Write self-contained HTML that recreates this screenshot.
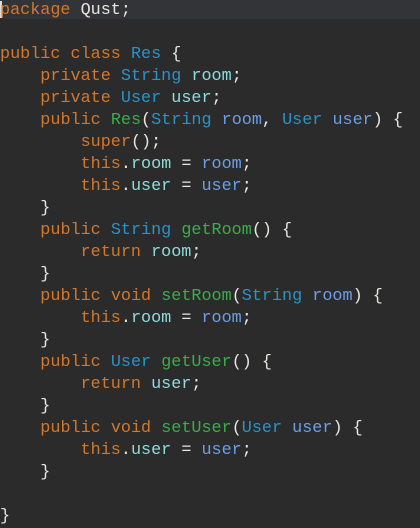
<!DOCTYPE html>
<html><head><meta charset="utf-8"><style>
html,body{margin:0;padding:0;background:#2b2b2b;width:420px;height:526px;overflow:hidden}
.hl{position:absolute;left:0;top:0;width:420px;height:19px;background:#333437}
.cur{position:absolute;left:0;top:1px;width:2px;height:17px;background:#ddd}
pre{position:absolute;left:0;top:0px;margin:0;font-family:"Liberation Mono",monospace;font-size:16.8px;line-height:22px;color:#e8e6e0}
.k{color:#d2782e}.t{color:#2a93c8}.f{color:#8edcdc}.p{color:#6e9ee6}.m{color:#3aae4a}
</style></head><body>
<div class="hl"></div><div class="cur"></div>
<pre><span class="k">package</span> Qust;

<span class="k">public</span> <span class="k">class</span> <span class="t">Res</span> {
    <span class="k">private</span> <span class="t">String</span> <span class="f">room</span>;
    <span class="k">private</span> <span class="t">User</span> <span class="f">user</span>;
    <span class="k">public</span> <span class="m">Res</span>(<span class="t">String</span> <span class="p">room</span>, <span class="t">User</span> <span class="p">user</span>) {
        <span class="k">super</span>();
        <span class="k">this</span>.<span class="f">room</span> = <span class="p">room</span>;
        <span class="k">this</span>.<span class="f">user</span> = <span class="p">user</span>;
    }
    <span class="k">public</span> <span class="t">String</span> <span class="m">getRoom</span>() {
        <span class="k">return</span> <span class="f">room</span>;
    }
    <span class="k">public</span> <span class="k">void</span> <span class="m">setRoom</span>(<span class="t">String</span> <span class="p">room</span>) {
        <span class="k">this</span>.<span class="f">room</span> = <span class="p">room</span>;
    }
    <span class="k">public</span> <span class="t">User</span> <span class="m">getUser</span>() {
        <span class="k">return</span> <span class="f">user</span>;
    }
    <span class="k">public</span> <span class="k">void</span> <span class="m">setUser</span>(<span class="t">User</span> <span class="p">user</span>) {
        <span class="k">this</span>.<span class="f">user</span> = <span class="p">user</span>;
    }

}</pre>
</body></html>
